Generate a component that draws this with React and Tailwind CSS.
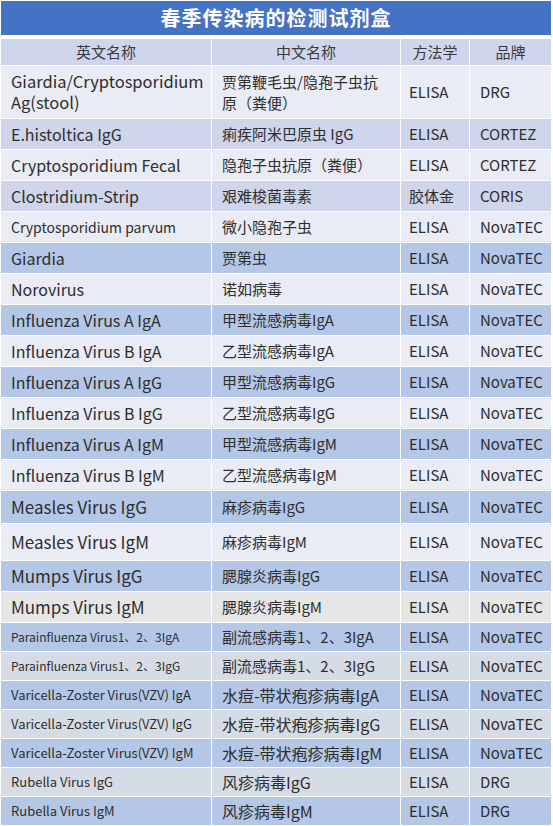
const FONT = { fontFamily: '"Noto Sans CJK SC", "Noto Sans", sans-serif' };

const rows = [
  { en: 'Giardia/Cryptosporidium\nAg(stool)', zh: '贾第鞭毛虫/隐孢子虫抗\n原（粪便）', m: 'ELISA', b: 'DRG', h: 'h-[52px]', bg: 'bg-[#E9EBF5]', es: 'text-[16.5px] leading-[21px]', zs: 'text-[15px] leading-[21px]' },
  { en: 'E.histoltica IgG', zh: '痢疾阿米巴原虫 IgG', m: 'ELISA', b: 'CORTEZ', h: 'h-[30px]', bg: 'bg-[#CFD5EA]', es: 'text-[16px]', zs: 'text-[15px]' },
  { en: 'Cryptosporidium Fecal', zh: '隐孢子虫抗原（粪便）', m: 'ELISA', b: 'CORTEZ', h: 'h-[30px]', bg: 'bg-[#E9EBF5]', es: 'text-[16px]', zs: 'text-[15px]' },
  { en: 'Clostridium-Strip', zh: '艰难梭菌毒素', m: '胶体金', b: 'CORIS', h: 'h-[30px]', bg: 'bg-[#CFD5EA]', es: 'text-[16px]', zs: 'text-[15px]' },
  { en: 'Cryptosporidium parvum', zh: '微小隐孢子虫', m: 'ELISA', b: 'NovaTEC', h: 'h-[30px]', bg: 'bg-[#E9EBF5]', es: 'text-[14px]', zs: 'text-[15px]' },
  { en: 'Giardia', zh: '贾第虫', m: 'ELISA', b: 'NovaTEC', h: 'h-[30px]', bg: 'bg-[#B4C7E7]', es: 'text-[16px]', zs: 'text-[15px]' },
  { en: 'Norovirus', zh: '诺如病毒', m: 'ELISA', b: 'NovaTEC', h: 'h-[30px]', bg: 'bg-[#E9EBF5]', es: 'text-[16px]', zs: 'text-[15px]' },
  { en: 'Influenza Virus A IgA', zh: '甲型流感病毒IgA', m: 'ELISA', b: 'NovaTEC', h: 'h-[30px]', bg: 'bg-[#B4C7E7]', es: 'text-[16px]', zs: 'text-[15px]' },
  { en: 'Influenza Virus B IgA', zh: '乙型流感病毒IgA', m: 'ELISA', b: 'NovaTEC', h: 'h-[30px]', bg: 'bg-[#E9EBF5]', es: 'text-[16px]', zs: 'text-[15px]' },
  { en: 'Influenza Virus A IgG', zh: '甲型流感病毒IgG', m: 'ELISA', b: 'NovaTEC', h: 'h-[30px]', bg: 'bg-[#B4C7E7]', es: 'text-[16px]', zs: 'text-[15px]' },
  { en: 'Influenza Virus B IgG', zh: '乙型流感病毒IgG', m: 'ELISA', b: 'NovaTEC', h: 'h-[30px]', bg: 'bg-[#E9EBF5]', es: 'text-[16px]', zs: 'text-[15px]' },
  { en: 'Influenza Virus A IgM', zh: '甲型流感病毒IgM', m: 'ELISA', b: 'NovaTEC', h: 'h-[30px]', bg: 'bg-[#B4C7E7]', es: 'text-[16px]', zs: 'text-[15px]' },
  { en: 'Influenza Virus B IgM', zh: '乙型流感病毒IgM', m: 'ELISA', b: 'NovaTEC', h: 'h-[30px]', bg: 'bg-[#E9EBF5]', es: 'text-[16px]', zs: 'text-[15px]' },
  { en: 'Measles Virus IgG', zh: '麻疹病毒IgG', m: 'ELISA', b: 'NovaTEC', h: 'h-[32px]', bg: 'bg-[#B4C7E7]', es: 'text-[17px]', zs: 'text-[15px]' },
  { en: 'Measles Virus IgM', zh: '麻疹病毒IgM', m: 'ELISA', b: 'NovaTEC', h: 'h-[36px]', bg: 'bg-[#E9EBF5]', es: 'text-[17px]', zs: 'text-[15px]' },
  { en: 'Mumps Virus IgG', zh: '腮腺炎病毒IgG', m: 'ELISA', b: 'NovaTEC', h: 'h-[30px]', bg: 'bg-[#B4C7E7]', es: 'text-[17px]', zs: 'text-[15px]' },
  { en: 'Mumps Virus IgM', zh: '腮腺炎病毒IgM', m: 'ELISA', b: 'NovaTEC', h: 'h-[30px]', bg: 'bg-[#E7E6E6]', es: 'text-[17px]', zs: 'text-[15px]' },
  { en: 'Parainfluenza Virus1、2、3IgA', zh: '副流感病毒1、2、3IgA', m: 'ELISA', b: 'NovaTEC', h: 'h-[28px]', bg: 'bg-[#B4C7E7]', es: 'text-[12px]', zs: 'text-[15px]' },
  { en: 'Parainfluenza Virus1、2、3IgG', zh: '副流感病毒1、2、3IgG', m: 'ELISA', b: 'NovaTEC', h: 'h-[28px]', bg: 'bg-[#D6DCE5]', es: 'text-[12px]', zs: 'text-[15px]' },
  { en: 'Varicella-Zoster Virus(VZV) IgA', zh: '水痘-带状疱疹病毒IgA', m: 'ELISA', b: 'NovaTEC', h: 'h-[28px]', bg: 'bg-[#B4C7E7]', es: 'text-[13px]', zs: 'text-[16px]' },
  { en: 'Varicella-Zoster Virus(VZV) IgG', zh: '水痘-带状疱疹病毒IgG', m: 'ELISA', b: 'NovaTEC', h: 'h-[28px]', bg: 'bg-[#D6DCE5]', es: 'text-[13px]', zs: 'text-[16px]' },
  { en: 'Varicella-Zoster Virus(VZV) IgM', zh: '水痘-带状疱疹病毒IgM', m: 'ELISA', b: 'NovaTEC', h: 'h-[28px]', bg: 'bg-[#B4C7E7]', es: 'text-[13px]', zs: 'text-[16px]' },
  { en: 'Rubella Virus IgG', zh: '风疹病毒IgG', m: 'ELISA', b: 'DRG', h: 'h-[28px]', bg: 'bg-[#D6DCE5]', es: 'text-[13px]', zs: 'text-[16px]' },
  { en: 'Rubella Virus IgM', zh: '风疹病毒IgM', m: 'ELISA', b: 'DRG', h: 'h-[28px]', bg: 'bg-[#B4C7E7]', es: 'text-[13px]', zs: 'text-[16px]' },
];

function Row({ r }) {
  const cell = `${r.bg} flex items-center whitespace-pre-line`;
  return (
    <div className={`grid grid-cols-[210px_188px_68px_81px] gap-x-px ${r.h}`}>
      <div className={`${cell} pl-[10px] ${r.es}`}>{r.en}</div>
      <div className={`${cell} pl-[10px] ${r.zs}`}>{r.zh}</div>
      <div className={`${cell} pl-[8px] text-[15px]`}>{r.m}</div>
      <div className={`${cell} pl-[10px] text-[15px]`}>{r.b}</div>
    </div>
  );
}

export default function App() {
  return (
    <div className="w-[553px] h-[826px] bg-white pt-px pl-px text-[#2e2e2e]" style={FONT}>
      <div className="w-[550px] h-[34px] bg-[#4472C4] flex items-center justify-center text-white font-bold text-[20px] tracking-[1px]">
        春季传染病的检测试剂盒
      </div>
      <div className="mt-[4px] flex flex-col gap-y-px w-[550px]">
        <div className="grid grid-cols-[210px_188px_68px_81px] gap-x-px h-[26px] text-[15px] text-[#3a3a3a]">
          <div className="bg-[#CFD5EA] flex items-center justify-center">英文名称</div>
          <div className="bg-[#CFD5EA] flex items-center justify-center">中文名称</div>
          <div className="bg-[#CFD5EA] flex items-center justify-center">方法学</div>
          <div className="bg-[#CFD5EA] flex items-center justify-center">品牌</div>
        </div>
        {rows.map((r, i) => (
          <Row key={i} r={r} />
        ))}
      </div>
    </div>
  );
}
